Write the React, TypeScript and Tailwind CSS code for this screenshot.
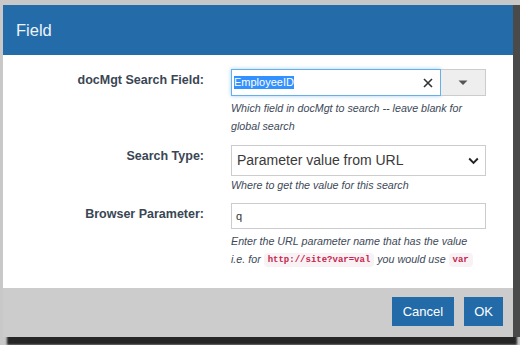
import React from "react";

const font = { fontFamily: '"Liberation Sans", Arial, sans-serif' };

function Code({ children }: { children: React.ReactNode }) {
  return (
    <span
      className="inline-block rounded-[4px] bg-[#f9f2f4] px-[4px] text-[9px] font-bold leading-[14px] text-[#c7254e] not-italic align-middle"
      style={{ fontFamily: '"Liberation Mono", "DejaVu Sans Mono", monospace' }}
    >
      {children}
    </span>
  );
}

export default function App() {
  return (
    <div
      className="w-[520px] h-[345px] overflow-hidden bg-[#c8c8c8] pt-[5px] pl-[3px]"
      style={font}
    >
      <div className="w-[510px] h-[332px] flex flex-col bg-white shadow-[7px_0_0_#4a4a4a,4px_8px_2px_#262626]">
        {/* Header */}
        <div className="h-[50px] shrink-0 bg-[#246ca9] flex items-center px-[13px]">
          <span className="text-[16.5px] text-[#eef3f8]">Field</span>
        </div>

        {/* Body */}
        <div className="flex-1 pt-[14px] grid grid-cols-[201px_255px] gap-x-[27px] content-start">
          {/* Row 1 */}
          <div className="text-right font-bold text-[12.5px] leading-[20px] pt-[1px] text-[#3a4654]">
            docMgt Search Field:
          </div>
          <div>
            <div className="flex h-[27px]">
              <div className="flex-1 flex items-center border border-[#66afe9] shadow-[0_0_4px_rgba(102,175,233,0.6)] pl-[2px] pr-[7px]">
                <span className="bg-[#3390ff] text-white text-[11px] leading-[13px]">EmployeeID</span>
                <div className="flex-1" />
                <svg width="10" height="10" viewBox="0 0 10 10">
                  <path d="M1 1 L9 9 M9 1 L1 9" stroke="#333" strokeWidth="1.6" />
                </svg>
              </div>
              <div className="w-[45px] bg-[#eeeeee] border border-l-0 border-[#cccccc] flex items-center justify-center">
                <svg width="10" height="6" viewBox="0 0 10 6">
                  <path d="M0.5 0.5 L9.5 0.5 L5 5 Z" fill="#555" />
                </svg>
              </div>
            </div>
            <div className="mt-[3px] italic text-[10.7px] leading-[18px] text-[#3d4958]">
              Which field in docMgt to search -- leave blank for global search
            </div>
          </div>

          {/* Row 2 */}
          <div className="mt-[10px] text-right font-bold text-[12.5px] leading-[20px] pt-[1px] text-[#3a4654]">
            Search Type:
          </div>
          <div className="mt-[10px]">
            <div className="h-[31px] border border-[#cccccc] flex items-center pl-[5px] pr-[6px]">
              <span className="flex-1 text-[14px] text-[#3a3a3a]">Parameter value from URL</span>
              <svg width="11" height="8" viewBox="0 0 11 8">
                <path d="M1.2 1.5 L5.5 5.8 L9.8 1.5" stroke="#222" strokeWidth="1.9" fill="none" />
              </svg>
            </div>
            <div className="italic text-[10.7px] leading-[18px] text-[#3d4958]">
              Where to get the value for this search
            </div>
          </div>

          {/* Row 3 */}
          <div className="mt-[9px] text-right font-bold text-[12.5px] leading-[20px] pt-[1px] text-[#3a4654]">
            Browser Parameter:
          </div>
          <div className="mt-[9px]">
            <div className="h-[26px] border border-[#cccccc] flex items-center pl-[4px]">
              <span className="text-[11px] text-[#333]">q</span>
            </div>
            <div className="mt-[3px] italic text-[10.7px] leading-[18px] text-[#3d4958]">
              <div>Enter the URL parameter name that has the value</div>
              <div>
                i.e. for <Code>http://site?var=val</Code> you would use <Code>var</Code>
              </div>
            </div>
          </div>
        </div>

        {/* Footer */}
        <div className="h-[49px] shrink-0 bg-[#cccccc] flex justify-end items-start pt-[9px] pr-[10px] gap-[10px]">
          <button className="h-[29px] px-[11px] bg-[#236ba8] text-white text-[13px]">Cancel</button>
          <button className="h-[29px] px-[10px] bg-[#236ba8] text-white text-[13px]">OK</button>
        </div>
      </div>
    </div>
  );
}
